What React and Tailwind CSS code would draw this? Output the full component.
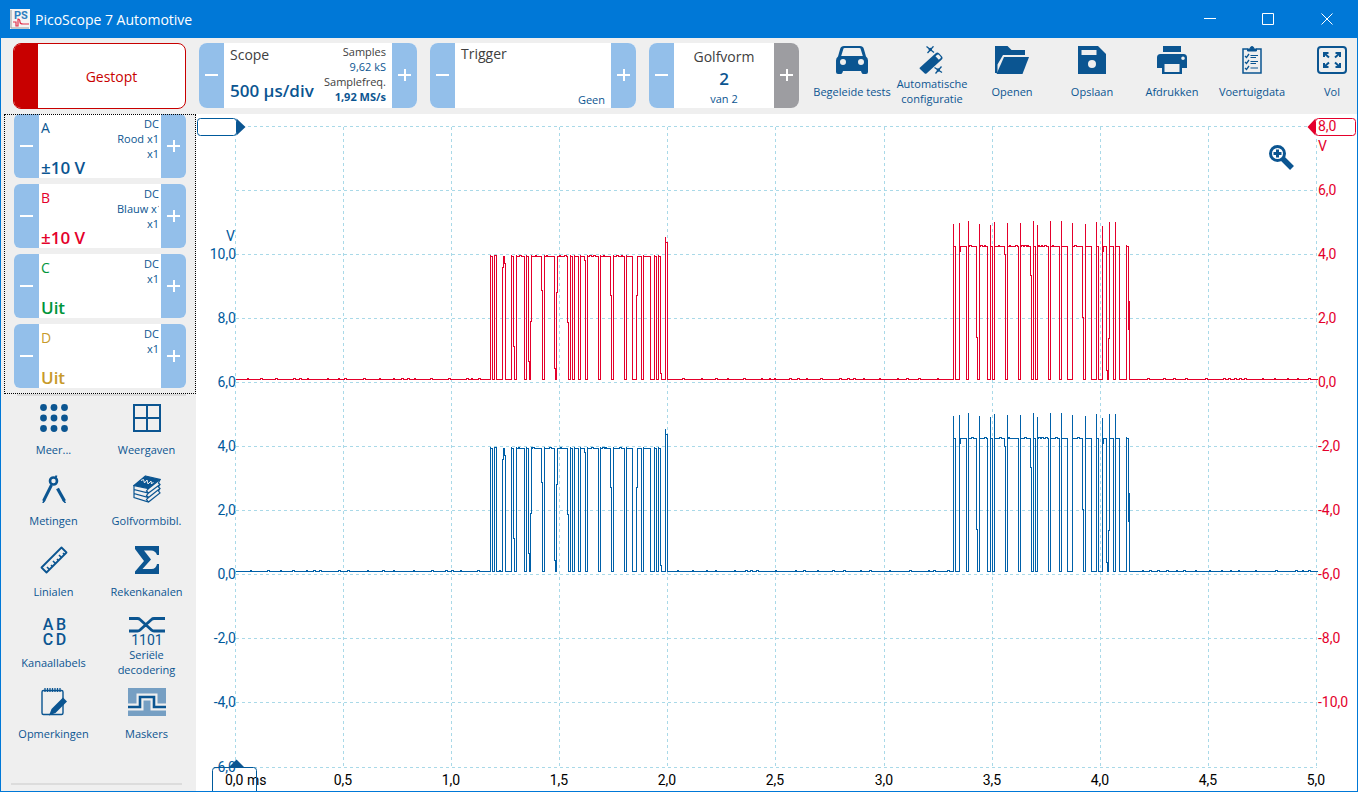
import React from "react";

const X_LINES = [235, 343, 451, 559, 667, 775, 884, 992, 1100, 1208, 1316];
const Y_LINES = [126, 190, 254, 318, 382, 446, 510, 574, 638, 702, 767];

const LOW = 379;

/* Level changes of the first burst: at x the signal moves to y. */
const BURST_1 = [
  [490, 256], [492, LOW], [494, 255], [496, LOW], [502, 267], [503, 256], [504, 263], [505, LOW],
  [511, 256], [513, 346], [514, LOW], [516, 256], [524, LOW], [526, 256], [528, 361], [529, LOW],
  [530, 321], [531, 256], [541, 290], [542, LOW], [544, 256], [554, 368], [555, LOW], [556, 292],
  [557, 256], [567, 322], [568, LOW], [570, 256], [572, LOW], [574, 256], [578, LOW], [580, 256],
  [584, 260], [585, LOW], [587, 256], [598, LOW], [600, 256], [610, 295], [611, LOW], [613, 256],
  [624, LOW], [626, 256], [632, LOW], [636, 295], [637, 256], [641, LOW], [643, 256], [650, LOW],
  [654, 256], [656, LOW], [658, 256], [660, 373], [661, LOW], [665, 236], [665, 242], [667, LOW],
];

/* The second burst overshoots on its rising edges: x, peak, then the settled level. */
const BURST_2 = [
  [953, 223], [953, 246], [955, LOW], [959, 222], [959, 251], [960, 246], [966, LOW], [968, 220], [968, 246],
  [976, 337], [977, LOW], [979, 223], [979, 246], [987, LOW], [990, 224], [990, 246], [992, LOW],
  [994, 221], [994, 246], [1004, 254], [1005, LOW], [1007, 222], [1007, 246], [1018, LOW],
  [1020, 222], [1020, 246], [1030, 275], [1031, LOW], [1033, 220], [1033, 246], [1035, LOW],
  [1037, 224], [1037, 246], [1048, LOW], [1050, 220], [1050, 246], [1059, LOW], [1061, 220], [1061, 246],
  [1067, LOW], [1072, 222], [1072, 246], [1082, 317], [1083, LOW], [1085, 223], [1085, 246],
  [1091, LOW], [1096, 221], [1096, 246], [1098, LOW], [1102, 225], [1102, 251], [1103, 246], [1106, 370], [1107, LOW],
  [1108, 338], [1109, 221], [1109, 246], [1113, LOW], [1115, 221], [1115, 246], [1119, LOW],
  [1126, 246], [1128, 329], [1128, 301], [1129, LOW],
];

function tracePath(seed) {
  let state = seed;
  const random = () => {
    state = (state * 1103515245 + 12345) % 2147483648;
    return state / 2147483648;
  };
  let x = 235;
  let y = LOW;
  let d = `M${x} ${y}`;
  const flatTo = (end) => {
    while (x < end) {
      const quiet = y === LOW ? 3 + Math.floor(random() * 16) : 1 + Math.floor(random() * 6);
      const start = Math.min(end, x + quiet);
      d += `H${start}`;
      x = start;
      if (end - x > 2) {
        d += `V${y - 1}H${x + 1 + Math.floor(random() * 2)}V${y}`;
        x += 2;
      }
    }
  };
  [...BURST_1, ...BURST_2].forEach(([nx, ny]) => {
    flatTo(nx);
    const rising = ny < y - 40 && (ny === 256 || ny === 246);
    if (rising) d += `V${ny - 2}`;
    d += `V${ny}`;
    y = ny;
  });
  flatTo(1317);
  return d;
}

const RED_TRACE = tracePath(7);
const BLUE_TRACE = tracePath(91);

const CHANNELS = [
  { name: "A", range: "±10 V", lines: ["DC", "Rood x1", "x1"], color: "text-[#0b5591]" },
  { name: "B", range: "±10 V", lines: ["DC", "Blauw x1", "x1"], color: "text-[#e4002b]" },
  { name: "C", range: "Uit", lines: ["DC", "x1"], color: "text-[#00953b]" },
  { name: "D", range: "Uit", lines: ["DC", "x1"], color: "text-[#c79a2b]" },
];

function StepButton({ kind, label, grey }) {
  return (
    <button
      type="button"
      aria-label={label}
      className={`flex w-[25px] shrink-0 items-center justify-center text-white ${grey ? "bg-[#9d9da1]" : "bg-[#93bfea]"}`}
    >
      <svg width="13" height="13" viewBox="0 0 13 13" fill="currentColor">
        <rect x="0" y="5" width="13" height="2" />
        {kind === "plus" && <rect x="6" y="0" width="2" height="12" />}
      </svg>
    </button>
  );
}

function CarIcon() {
  return (
    <svg width="32" height="28" viewBox="0 0 32 28" fill="currentColor">
      <path fillRule="evenodd" d="M8 0h16q3 0 3.8 2.8L30 10.500q2 1.500 2 4V26q0 2-2 2h-2.500q-1.500 0-2-1.500L25 25H7l-.5 1.500Q6 28 4.500 28H2q-2 0-2-2V14.500q0-2.500 2-4L4.200 2.800Q5 0 8 0ZM7.500 2.500 5.200 10h21.600L24.500 2.500Q24.300 2 23.500 2h-15q-.8 0-1 .5ZM7 13a3 3 0 1 0 0 6 3 3 0 0 0 0-6Zm18 0a3 3 0 1 0 0 6 3 3 0 0 0 0-6Z" />
    </svg>
  );
}

function WandIcon() {
  return (
    <svg width="28" height="28" viewBox="0 0 28 28" fill="none" stroke="currentColor">
      <path
        d="M2 21.500 18 7q1.500-1.200 3 .3l3 3.300q1.200 1.400-.2 2.800L8.500 27.500q-1 .8-2-.2L2 23q-.8-.8 0-1.500ZM17.500 10.200l3.300 3.600 1.700-1.600q.7-.7.1-1.400L20.800 8.800q-.7-.7-1.500 0Z"
        fill="currentColor"
        fillRule="evenodd"
        stroke="none"
      />
      <path d="m8.500.500 7.500 6M15.500.300l-6 6.700M16.500 21.500l7.500 5M23.500 20.500l-6 7" strokeWidth="1.300" />
      <circle cx="12.300" cy="3.500" r="1.700" fill="currentColor" stroke="none" />
      <circle cx="20.300" cy="24" r="1.700" fill="currentColor" stroke="none" />
    </svg>
  );
}

function FolderIcon() {
  return (
    <svg width="34" height="28" viewBox="0 0 34 28" fill="currentColor">
      <path d="M0 0h12.500l4 4H30v5H8L2.500 18.500V27H0Z" />
      <path d="M9 11h25l-6.500 17H1.500Z" />
    </svg>
  );
}

function SaveIcon() {
  return (
    <svg width="28" height="28" viewBox="0 0 28 28" fill="currentColor">
      <path fillRule="evenodd" d="M0 0h20l8 8v20H0ZM3.500 4v5h15V4Zm10.500 10a4 4 0 1 0 0 8 4 4 0 0 0 0-8Z" />
    </svg>
  );
}

function PrintIcon() {
  return (
    <svg width="30" height="28" viewBox="0 0 30 28" fill="currentColor">
      <path d="M6 0h18v6H6Z" />
      <path fillRule="evenodd" d="M3.500 8h23Q30 8 30 11.500V22h-5v-5H5v5H0V11.500Q0 8 3.500 8ZM26 10.500a1.800 1.800 0 1 0 0 3.600 1.800 1.800 0 0 0 0-3.600Z" />
      <path fillRule="evenodd" d="M5 16h20v12H5Zm2.500 2v8h15v-8Z" />
    </svg>
  );
}

function ClipboardIcon() {
  return (
    <svg width="20" height="28" viewBox="0 0 20 28" fill="none" stroke="currentColor">
      <path d="M6 3H1v24h18V3h-5" strokeWidth="1.500" />
      <path d="M5.500 5V3H8q0-2.500 2-2.500T12 3h2.500v2Z" fill="currentColor" strokeWidth="1" />
      <path d="m3 10 1.500 1.500L7 8M3 16l1.500 1.500L7 14M3 22l1.500 1.500L7 20" strokeWidth="1.300" />
      <path d="M8.500 9.500H16M8.500 11.500H14M8.500 15.500H16M8.500 17.500H14M8.500 22H16" strokeWidth="1.200" />
    </svg>
  );
}

function FullIcon() {
  return (
    <svg width="30" height="28" viewBox="0 0 30 28" fill="none" stroke="currentColor" strokeWidth="2">
      <rect x="1" y="1" width="28" height="26" rx="3" />
      <path d="m7 7 5 4.500M23 7l-5 4.500M7 21l5-4.500M23 21l-5-4.500" />
      <path d="M7 11V7h4.500M18.500 7H23v4M7 17v4h4.500M18.500 21H23v-4" />
    </svg>
  );
}

function DotsIcon() {
  return (
    <svg width="28" height="28" viewBox="0 0 28 28" fill="currentColor">
      {[3.5, 14, 24.5].map((cy) => [3.5, 14, 24.5].map((cx) => <circle key={`${cx}-${cy}`} cx={cx} cy={cy} r="3.400" />))}
    </svg>
  );
}

function ViewsIcon() {
  return (
    <svg width="28" height="28" viewBox="0 0 28 28" fill="none" stroke="currentColor" strokeWidth="2">
      <path d="M1 1h26v26H1ZM14 1v26M1 14h26" />
    </svg>
  );
}

function CompassIcon() {
  return (
    <svg width="28" height="28" viewBox="0 0 28 28" fill="none" stroke="currentColor">
      <circle cx="13.500" cy="6" r="3.500" strokeWidth="2.600" />
      <path d="M15.500 3 16.500.500" strokeWidth="2" />
      <path d="M11.500 10 3.500 26" strokeWidth="3" />
      <path d="m17.500 13.500 7 12.500" strokeWidth="3.200" />
      <path d="m4.800 25-2 3M23 25l2.500 3" strokeWidth="1.500" />
    </svg>
  );
}

function LibraryIcon() {
  return (
    <svg width="28" height="28" viewBox="0 0 28 28" fill="none" stroke="currentColor" strokeWidth="1.200">
      <path d="M12.500 1 27 4.500 15.500 13.500 1 10.500Z" fill="currentColor" />
      <path d="M27 4.500 25.500 8 27 9.500 15.500 18 1 14.500v-4M27 9.500 25.500 12 27 13.500 15.500 22.500 1 18.500v-4M27 13.500 25.500 16 27 18 15.500 27 1 22.500v-4M15.500 13.500l-2 2.500 2 2-2 2.500 2 2-2 2 2 2.500" />
      <path d="m8 5.500 2.500-1 1 3.500 2.500-3 1 4 3-3 .5 3 2-2" stroke="#efefef" strokeWidth="1" />
    </svg>
  );
}

function RulerIcon() {
  return (
    <svg width="28" height="28" viewBox="0 0 28 28" fill="none" stroke="currentColor" strokeWidth="1.800">
      <path d="M1.500 21.500 21.500 1.500l5 5-20 20Z" strokeLinejoin="round" />
      <path d="m9.500 23.500-2.500-2.500M12.500 20.500 11 19M15.500 17.500l-2.500-2.500M18.500 14.500 17 13M21.500 11.500 19 9M24.500 8.500 23 7" strokeWidth="1.600" />
    </svg>
  );
}

function SigmaIcon() {
  return (
    <svg width="28" height="28" viewBox="0 0 28 28" fill="currentColor">
      <path d="M2 0h24v9h-2q-1.500-4.500-6-4.500h-7l7 9L9.500 23h9q4.500 0 5.500-5h2v10H2v-2.500L11 15 2 3Z" />
    </svg>
  );
}

function LabelsIcon() {
  return (
    <svg width="28" height="28" viewBox="0 0 28 28" fill="currentColor" fontFamily="Roboto, sans-serif" fontWeight="500" fontSize="16" textAnchor="middle">
      <text x="8" y="13">A</text>
      <text x="21" y="13">B</text>
      <text x="8" y="28">C</text>
      <text x="21" y="28">D</text>
    </svg>
  );
}

function SerialIcon() {
  return (
    <svg width="36" height="28" viewBox="0 0 36 28" fill="none" stroke="currentColor">
      <path d="M0 1.500h8.500q1.500 0 2.500 1L22.500 13q1 1 2.500 1h11M0 14h8.500q1.500 0 2.500-1L22.500 2.500q1-1 2.500-1h11" strokeWidth="2.800" />
      <text x="18" y="28" fill="currentColor" stroke="none" fontFamily="Roboto, sans-serif" fontSize="14" textAnchor="middle">1101</text>
    </svg>
  );
}

function NotesIcon() {
  return (
    <svg width="28" height="28" viewBox="0 0 28 28" fill="none" stroke="currentColor">
      <rect x="2" y="2.500" width="21" height="24" rx="1.500" strokeWidth="1.400" />
      <path d="M5 0v4M7.500 0v4M10 0v4M12.500 0v4M15 0v4M17.500 0v4M20 0v4" strokeWidth="1.300" />
      <path d="m23 9.500 4 4L15.500 25 9 27.500 11.500 21Z" fill="currentColor" stroke="none" />
    </svg>
  );
}

function MasksIcon() {
  return (
    <svg width="38" height="28" viewBox="0 0 38 28" fill="none">
      <path d="M0 0h38v28H0Z" fill="#769fc3" />
      <path d="M0 19h12V9h14v10h12" stroke="#efefef" strokeWidth="7" />
      <path d="M0 19h12V9h14v10h12" stroke="#0b5591" strokeWidth="2.600" />
    </svg>
  );
}

const ACTIONS = [
  ["Begeleide tests", CarIcon],
  ["Automatische configuratie", WandIcon],
  ["Openen", FolderIcon],
  ["Opslaan", SaveIcon],
  ["Afdrukken", PrintIcon],
  ["Voertuigdata", ClipboardIcon],
  ["Vol", FullIcon],
];

const TOOLS = [
  ["Meer...", DotsIcon],
  ["Weergaven", ViewsIcon],
  ["Metingen", CompassIcon],
  ["Golfvormbibl.", LibraryIcon],
  ["Linialen", RulerIcon],
  ["Rekenkanalen", SigmaIcon],
  ["Kanaallabels", LabelsIcon],
  ["Seriële decodering", SerialIcon],
  ["Opmerkingen", NotesIcon],
  ["Maskers", MasksIcon],
];

function IconButton({ label, Icon }) {
  return (
    <button type="button" className="flex flex-col items-center gap-0.5 text-[11px] leading-[15px] text-[#0b5591]">
      <Icon />
      <span className="flex h-[30px] items-center justify-center text-center">{label}</span>
    </button>
  );
}

function TitleBar() {
  return (
    <div className="flex h-[38px] items-center bg-[#0078d7] pl-[9px] text-white">
      <svg width="20" height="20" viewBox="0 0 20 20" fill="none">
        <rect width="20" height="20" fill="#f4f4f4" />
        <path d="M1 1v18h18" stroke="#9a9a9a" />
        <text x="4" y="10" fill="#2f7fc0" fontFamily="Roboto, sans-serif" fontSize="11" fontWeight="700">PS</text>
        <path d="M3 13h3v4h2v-7q2 0 2 3 0 2 3 2h6" stroke="#e0304a" strokeWidth="1.200" />
      </svg>
      <h1 className="ml-[5px] text-[14px]">PicoScope 7 Automotive</h1>
      <div className="ml-auto flex">
        <button type="button" aria-label="Minimaliseren" className="flex h-[38px] w-[58px] items-center justify-center">
          <svg width="12" height="12" viewBox="0 0 12 12" stroke="currentColor"><path d="M0 5.500h12" /></svg>
        </button>
        <button type="button" aria-label="Maximaliseren" className="flex h-[38px] w-[58px] items-center justify-center">
          <svg width="12" height="12" viewBox="0 0 12 12" fill="none" stroke="currentColor"><path d="M.5.500h11v11H.5Z" /></svg>
        </button>
        <button type="button" aria-label="Sluiten" className="flex h-[38px] w-[60px] items-center justify-center">
          <svg width="12" height="12" viewBox="0 0 12 12" stroke="currentColor"><path d="m.5.500 11 11M11.500.500l-11 11" /></svg>
        </button>
      </div>
    </div>
  );
}

function Toolbar() {
  return (
    <header className="flex h-[76px] items-start gap-[13px] overflow-hidden pt-[5px] pl-3">
      <button type="button" className="flex h-[66px] w-[173px] shrink-0 overflow-hidden rounded-lg border border-[#c80000] bg-white text-[14px] text-[#c80000]">
        <span className="h-full w-6 bg-[#c80000]" />
        <span className="flex h-full flex-1 items-center justify-center">Gestopt</span>
      </button>

      <section className="flex h-[65px] w-[218px] shrink-0 overflow-hidden rounded-lg bg-white">
        <StepButton kind="minus" label="Tijdbasis omlaag" />
        <div className="flex flex-1 justify-between px-1.5 whitespace-nowrap">
          <div className="flex flex-col justify-between pt-0.5 pb-[5px]">
            <span className="text-[14px] leading-5 text-[#404040]">Scope</span>
            <span className="text-[17px] leading-6 font-semibold text-[#0b5591]">500 µs/div</span>
          </div>
          <div className="flex flex-col pt-px text-right text-[11px] leading-[15px] text-[#404040]">
            <span>Samples</span>
            <span className="text-[#0b5591]">9,62 kS</span>
            <span>Samplefreq.</span>
            <span className="font-bold text-[#0b5591]">1,92 MS/s</span>
          </div>
        </div>
        <StepButton kind="plus" label="Tijdbasis omhoog" />
      </section>

      <section className="flex h-[65px] w-[206px] shrink-0 overflow-hidden rounded-lg bg-white">
        <StepButton kind="minus" label="Vorige trigger" />
        <div className="flex flex-1 flex-col justify-between px-1.5 py-px">
          <span className="text-[14px] leading-5 text-[#404040]">Trigger</span>
          <span className="self-end text-[11px] leading-[15px] text-[#0b5591]">Geen</span>
        </div>
        <StepButton kind="plus" label="Volgende trigger" />
      </section>

      <section className="flex h-[65px] w-[150px] shrink-0 overflow-hidden rounded-lg bg-white">
        <StepButton kind="minus" label="Vorige golfvorm" />
        <div className="flex flex-1 flex-col items-center pt-1">
          <span className="text-[14px] leading-5 text-[#404040]">Golfvorm</span>
          <span className="text-[17px] leading-6 font-semibold text-[#0b5591]">2</span>
          <span className="text-[11px] leading-[15px] text-[#0b5591]">van 2</span>
        </div>
        <StepButton kind="plus" label="Volgende golfvorm" grey />
      </section>

      <nav className="grid shrink-0 auto-cols-[80px] grid-flow-col pt-[3px]">
        {ACTIONS.map(([label, Icon]) => (
          <IconButton key={label} label={label} Icon={Icon} />
        ))}
      </nav>
    </header>
  );
}

function Channel({ name, range, lines, color }) {
  return (
    <section className="flex h-16 overflow-hidden rounded-md bg-white">
      <StepButton kind="minus" label={`Kanaal ${name} omlaag`} />
      <div className="flex min-w-0 flex-1 justify-between px-0.5 whitespace-nowrap">
        <div className={`flex flex-col justify-between pt-1 ${color}`}>
          <span className="text-[14px] leading-5 font-medium">{name}</span>
          <span className="text-[17px] leading-5 font-semibold">{range}</span>
        </div>
        <div className="flex w-[42px] flex-col overflow-hidden pt-0.5 text-[11px] leading-[15px] text-[#0b5591]">
          {lines.map((line, i) => (
            <span key={i} className={line.length > 7 ? "self-start" : "self-end"}>{line}</span>
          ))}
        </div>
      </div>
      <StepButton kind="plus" label={`Kanaal ${name} omhoog`} />
    </section>
  );
}

function Sidebar() {
  return (
    <aside className="flex w-[195px] shrink-0 flex-col">
      <div className="ml-[3px] flex flex-col gap-1.5 px-2.5 pb-1.5 outline-1 -outline-offset-1 outline-black outline-dotted">
        {CHANNELS.map((channel) => (
          <Channel key={channel.name} {...channel} />
        ))}
      </div>
      <div className="mr-2.5 ml-4 h-0.5 bg-[#dcdcdc]" />
      <nav className="mt-2 mr-[3px] ml-1.5 grid grid-cols-2 gap-y-[11px]">
        {TOOLS.map(([label, Icon]) => (
          <IconButton key={label} label={label} Icon={Icon} />
        ))}
      </nav>
      <div className="mt-auto mr-3.5 mb-1.5 ml-2.5 h-0.5 bg-[#dcdcdc]" />
    </aside>
  );
}

function ScopeView() {
  const format = (n) => n.toFixed(1).replace(".", ",");
  return (
    <svg viewBox="196 114 1161 677" className="h-auto w-full bg-white" fontFamily="Roboto, sans-serif" fontSize="14">
      <g transform="translate(0.5 0.5)" stroke="#a9d9e8" strokeDasharray="3 3" shapeRendering="crispEdges">
        {X_LINES.map((x) => <path key={x} d={`M${x} 126V767`} />)}
        {Y_LINES.map((y) => <path key={y} d={`M235 ${y}H1316`} />)}
      </g>

      <g transform="translate(0.5 0.5)" fill="none" shapeRendering="crispEdges">
        <path d={RED_TRACE} stroke="#e4002b" />
        <path d={BLUE_TRACE} stroke="#0060a8" transform="translate(0 192)" />
      </g>

      <g fill="#005a9c" textAnchor="end">
        <text x="235" y="241">V</text>
        {Y_LINES.slice(2).map((y, i) => <text key={y} x="236" y={y + 5}>{format(10 - 2 * i)}</text>)}
      </g>
      <g fill="#e4002b">
        <text x="1318" y="151">V</text>
        {Y_LINES.slice(1, 10).map((y, i) => <text key={y} x="1318" y={y + 5}>{format(6 - 2 * i)}</text>)}
      </g>
      <g fill="#000000" textAnchor="middle">
        {X_LINES.slice(1).map((x, i) => <text key={x} x={x} y="785">{format((i + 1) * 0.5)}</text>)}
        <text x="225" y="785" textAnchor="start">0,0 ms</text>
      </g>

      <g transform="translate(0.5 0.5)">
        <rect x="197" y="118" width="39" height="17" rx="3" fill="#ffffff" stroke="#005a9c" />
        <path d="M236 118v17l9-8.500Z" fill="#0b5591" />
        <rect x="1315" y="118" width="40" height="17" rx="3" fill="#ffffff" stroke="#e4002b" />
        <path d="M1315 118v17l-8-8.500Z" fill="#e4002b" />
        <path d="M212 795v-25q0-3 3-3h38q3 0 3 3v25" fill="none" stroke="#005a9c" />
        <path d="M228 767h16l-8-8Z" fill="#0b5591" />
      </g>
      <text x="1318" y="131" fill="#e4002b">8,0</text>

      <g fill="none" stroke="#0b5591">
        <circle cx="1277.500" cy="153.500" r="7" strokeWidth="3" />
        <path d="M1273.500 153.500h8M1277.500 149.500v8" strokeWidth="3" />
        <path d="m1282.500 158.500 9.500 9.500" strokeWidth="5.500" />
      </g>
    </svg>
  );
}

export default function App() {
  return (
    <div className="flex min-h-screen flex-col border border-t-0 border-[#0078d7] bg-[#efefef] font-['Open_Sans','Noto_Sans',sans-serif]">
      <TitleBar />
      <Toolbar />
      <div className="flex flex-1">
        <Sidebar />
        <main className="flex min-w-0 flex-1 flex-col bg-white">
          <ScopeView />
        </main>
      </div>
    </div>
  );
}
